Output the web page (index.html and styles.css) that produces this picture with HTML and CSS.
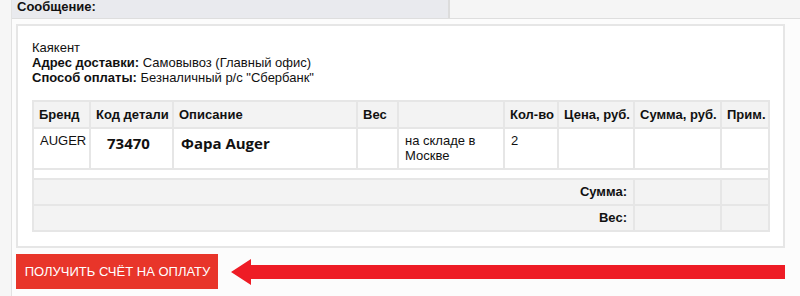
FILE: index.html
```html
<!DOCTYPE html>
<html lang="ru">
<head>
  <meta charset="UTF-8" />
  <title>Заказ</title>
  <link rel="stylesheet" href="styles.css">
</head>
<body>
  <div class="page">
    <div class="sidebar"></div>
    <div class="main">
      <div class="msg-row">
        <div class="msg-label">Сообщение:</div>
        <div class="msg-value"></div>
      </div>

      <div class="box">
        <div class="info">
          <div>Каякент</div>
          <div><b>Адрес доставки:</b> Самовывоз (Главный офис)</div>
          <div><b>Способ оплаты:</b> Безналичный р/с "Сбербанк"</div>
        </div>

        <table class="items">
          <colgroup>
            <col style="width:57px"><col style="width:83px"><col style="width:184px">
            <col style="width:41px"><col style="width:106px"><col style="width:54px">
            <col style="width:76px"><col style="width:87px"><col style="width:48px">
          </colgroup>
          <thead>
            <tr>
              <th>Бренд</th><th>Код детали</th><th>Описание</th><th>Вес</th><th></th>
              <th>Кол-во</th><th>Цена, руб.</th><th>Сумма, руб.</th><th>Прим.</th>
            </tr>
          </thead>
          <tbody>
            <tr class="item">
              <td>AUGER</td>
              <td><span class="code">73470</span></td>
              <td><span class="descr">Фара Auger</span></td>
              <td></td>
              <td>на складе в Москве</td>
              <td>2</td>
              <td></td><td></td><td></td>
            </tr>
            <tr class="spacer"><td colspan="9"></td></tr>
            <tr class="total">
              <td colspan="7" class="label">Сумма:</td><td></td><td></td>
            </tr>
            <tr class="total">
              <td colspan="7" class="label">Вес:</td><td></td><td></td>
            </tr>
          </tbody>
        </table>
      </div>

      <div class="actions">
        <button type="button" class="pay">Получить счёт на оплату</button>
        <svg class="arrow" width="554" height="26" viewBox="0 0 554 26">
          <polygon points="0,13 20,0 20,6 554,6 554,20 20,20 20,26" fill="#ee1c25" />
        </svg>
      </div>
    </div>
  </div>
</body>
</html>
```

FILE: styles.css
```css
body { margin: 0; background: #fff; font-family: "Liberation Sans", Arial, sans-serif; font-size: 13px; color: #111; }
.page { display: flex; height: 296px; overflow: hidden; }
.sidebar { width: 12px; background: #f6f6f6; border-right: 1px solid #e2e2e2; }
.main { flex: 1; background: #fcfcfc; }

.msg-row { display: flex; height: 18px; border-bottom: 1px solid #dedede; }
.msg-label { width: 431px; padding-left: 5px; background: #e9eaee; font-weight: bold; line-height: 14px; }
.msg-value { flex: 1; background: #f5f5f5; border-left: 2px solid #dcdcdc; }

.box { margin: 5px 15px 0 4px; border: 2px solid #e6e6e6; background: #fff; padding: 14px 13px 14px 14px; }
.info { line-height: 15px; margin-bottom: 15px; }

.items { width: 100%; table-layout: fixed; border-collapse: collapse; border: 2px solid #e6e6e6; }
.items th, .items td { border: 2px solid #e6e6e6; text-align: left; vertical-align: top; }
.items th { background: #f3f3f3; height: 25px; padding: 0 4px 0 5px; font-weight: bold; line-height: 25px; white-space: nowrap; vertical-align: middle; }
.items .item td { height: 35px; padding: 4px 6px 0; line-height: 15px; }
.items .code { font-family: "Open Sans", sans-serif; font-weight: bold; font-size: 15px; padding-left: 10px; line-height: 20px; }
.items .descr { font-family: "Open Sans", sans-serif; font-weight: bold; font-size: 15px; padding-left: 1px; line-height: 20px; }
.items .spacer td { height: 8px; padding: 0; background: #fff; }
.items .total td { height: 24px; padding: 0 6px; background: #f3f3f3; line-height: 24px; vertical-align: middle; }
.items .total .label { text-align: right; font-weight: bold; }

.actions { display: flex; align-items: center; gap: 13px; margin: 6px 0 0 4px; }
.pay { width: 202px; height: 35px; padding: 0 0 0 1px; border: none; background: #e8352a; color: #fff; font-family: "Liberation Sans", Arial, sans-serif; font-size: 13px; text-transform: uppercase; cursor: pointer; }
.arrow { display: block; }
```
